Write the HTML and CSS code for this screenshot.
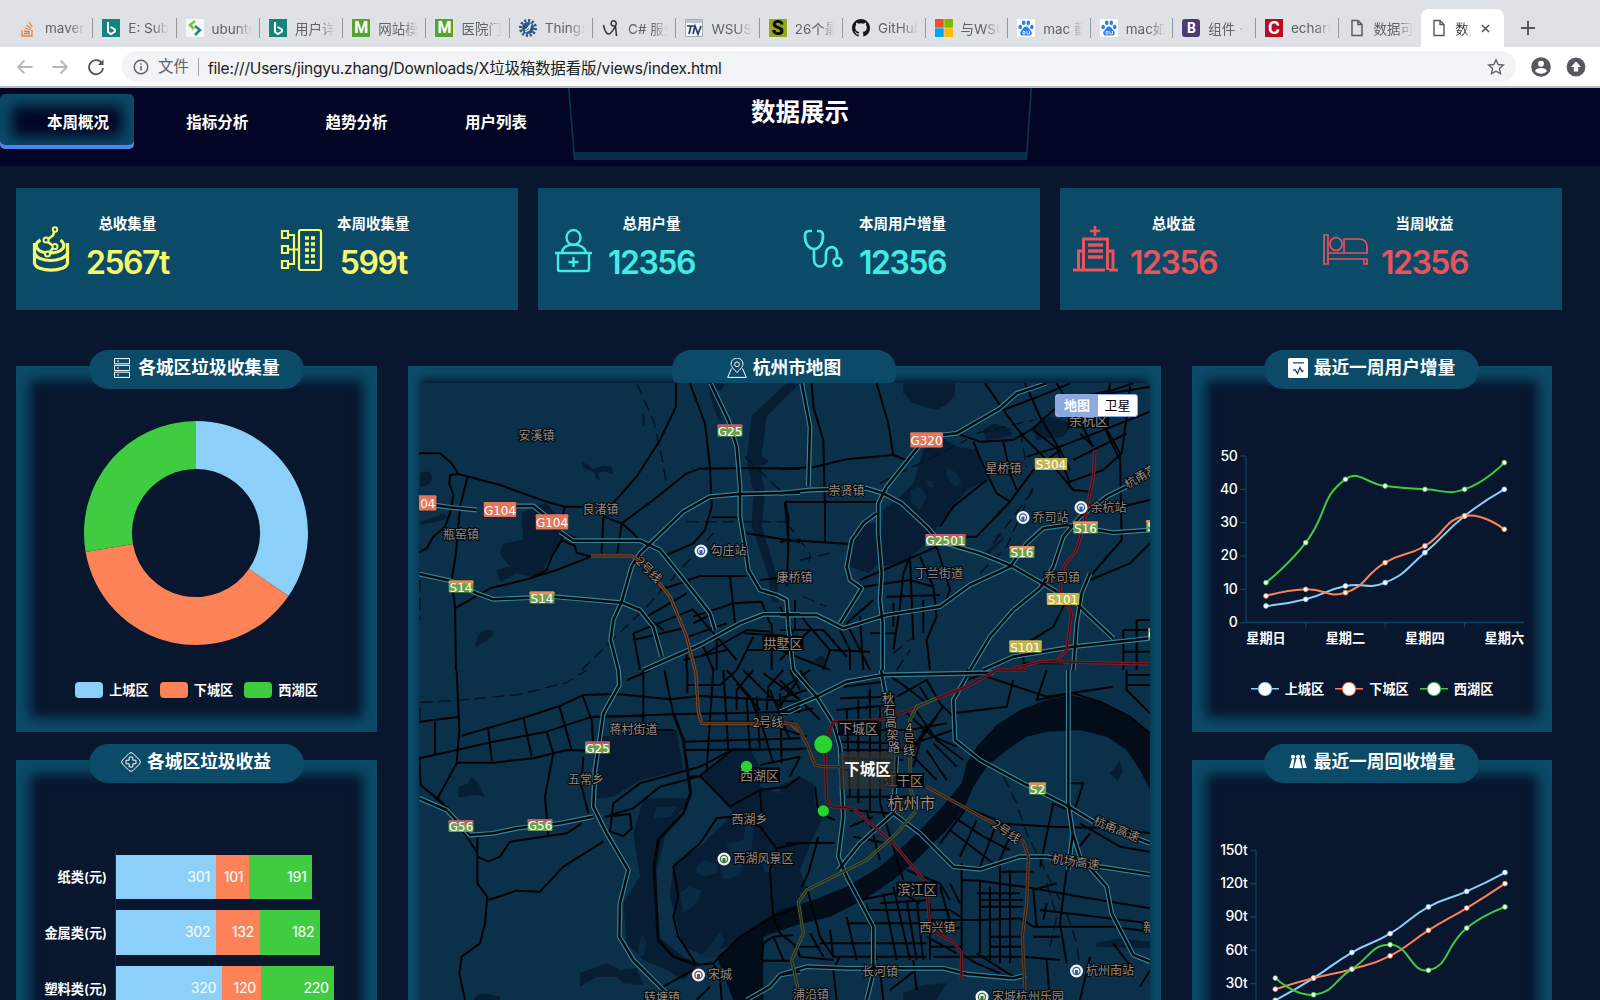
FILE: index.html
```html
<!DOCTYPE html>
<html lang="zh-CN">
<head>
<meta charset="utf-8">
<title>数据展示</title>
<link rel="stylesheet" href="styles.css">
</head>
<body>
<div class="browser">
  <div class="tabs">
    <div class="tab"><svg class="fav" viewBox="0 0 18 18"><path d="M3 11v6h10v-6M5 14.500h6M5 12l6 .8M5.800 9l5.700 2M7.500 6l4.600 3.800M10 3l3.300 5" fill="none" stroke="#e8813a" stroke-width="1.300"/></svg><span>maven</span></div>
    <div class="tab"><svg class="fav" viewBox="0 0 18 18"><path fill="#14857d" d="M0 0h18v18H0z"/><path d="M6 3v10l3 2 4-2.500v-2L8.500 8" fill="none" stroke="#fff" stroke-width="2"/></svg><span>E: Sub-process</span></div>
    <div class="tab"><svg class="fav" viewBox="0 0 18 18"><path fill="#f4f7f6" d="M0 0h18v18H0z"/><path d="M9 2L4 6l4 4" fill="none" stroke="#7ac143" stroke-width="2.500"/><path d="M9 7l5 4-5 5" fill="none" stroke="#2c7f91" stroke-width="2.500"/></svg><span>ubuntu安装</span></div>
    <div class="tab"><svg class="fav" viewBox="0 0 18 18"><path fill="#14857d" d="M0 0h18v18H0z"/><path d="M6 3v10l3 2 4-2.500v-2L8.500 8" fill="none" stroke="#fff" stroke-width="2"/></svg><span>用户详情</span></div>
    <div class="tab"><b class="fav letter green">M</b><span>网站模板</span></div>
    <div class="tab"><b class="fav letter green">M</b><span>医院门户</span></div>
    <div class="tab"><svg class="fav" viewBox="0 0 18 18"><circle cx="9" cy="9" r="7.500" fill="none" stroke="#31577f" stroke-width="3" stroke-dasharray="2.200 1.700"/><circle cx="9" cy="9" r="6" fill="#31577f"/><path d="M6 11l2-1 4-5-2 6-4 2" stroke="#dce9f5" stroke-width="1.300" fill="none"/></svg><span>ThingsBoard</span></div>
    <div class="tab"><svg class="fav" viewBox="0 0 18 18"><path d="M1.500 6c1 5 2 9 5 9s5-5 7-8c2-4-1-6-3-5s-2 5 1 5h2l1 10" fill="none" stroke="#333" stroke-width="1.500"/></svg><span>C# 服务端</span></div>
    <div class="tab"><svg class="fav" viewBox="0 0 18 18"><path d="M.5.5h17v17H.5z" fill="#f5f7f8" stroke="#a8adb2"/><path d="M1 1h16v3H1z" fill="#b8c5d4"/><path d="M2 7h7M6 7l-2 8M8 15l2-8 3 8 3-8" stroke="#203c67" stroke-width="1.700" fill="none"/></svg><span>WSUS服务</span></div>
    <div class="tab"><b class="fav letter olive">S</b><span>26个最好</span></div>
    <div class="tab"><svg class="fav" viewBox="0 0 16 16"><path fill="#16191c" d="M8 0C3.580 0 0 3.580 0 8c0 3.540 2.290 6.530 5.470 7.590.4.070.55-.17.55-.38 0-.19-.01-.82-.01-1.490-2.010.37-2.530-.49-2.690-.94-.09-.23-.48-.94-.82-1.130-.28-.15-.68-.52-.01-.53.63-.01 1.080.58 1.230.82.72 1.210 1.870.87 2.330.66.07-.52.28-.87.51-1.070-1.780-.2-3.640-.89-3.640-3.950 0-.87.31-1.590.82-2.150-.08-.2-.36-1.020.08-2.120 0 0 .67-.21 2.200.82a7.500 7.500 0 0 1 4 0c1.530-1.040 2.200-.82 2.200-.82.44 1.100.16 1.920.08 2.120.51.56.82 1.270.82 2.150 0 3.070-1.870 3.750-3.650 3.950.29.25.54.73.54 1.480 0 1.070-.01 1.930-.01 2.200 0 .21.15.46.55.38A8 8 0 0 0 16 8c0-4.420-3.580-8-8-8z"/></svg><span>GitHub</span></div>
    <div class="tab"><svg class="fav" viewBox="0 0 18 18"><path fill="#f25022" d="M0 0h8.700v8.700H0z"/><path fill="#7fba00" d="M9.300 0H18v8.700H9.300z"/><path fill="#00a4ef" d="M0 9.300h8.700V18H0z"/><path fill="#ffb900" d="M9.300 9.300H18V18H9.300z"/></svg><span>与WSUS</span></div>
    <div class="tab"><svg class="fav" viewBox="0 0 18 18"><path fill="#fff" d="M0 0h18v18H0z"/><g fill="#2f7fe6"><ellipse cx="3.200" cy="8" rx="1.800" ry="2.300"/><ellipse cx="6.700" cy="3.800" rx="1.800" ry="2.400"/><ellipse cx="11.300" cy="3.800" rx="1.800" ry="2.400"/><ellipse cx="14.800" cy="8" rx="1.800" ry="2.300"/><path d="M9 7.500c2.500 0 3 2.500 5 4.500 2 2.500 0 5-2.500 4.500H6.500C4 17 2 14.500 4 12c2-2 2.500-4.500 5-4.500z"/></g><path d="M6 12.500h2v2.500H6v-2.500M10 12v3h2.500v-3" fill="none" stroke="#fff" stroke-width=".8"/></svg><span>mac 截图</span></div>
    <div class="tab"><svg class="fav" viewBox="0 0 18 18"><path fill="#fff" d="M0 0h18v18H0z"/><g fill="#2f7fe6"><ellipse cx="3.200" cy="8" rx="1.800" ry="2.300"/><ellipse cx="6.700" cy="3.800" rx="1.800" ry="2.400"/><ellipse cx="11.300" cy="3.800" rx="1.800" ry="2.400"/><ellipse cx="14.800" cy="8" rx="1.800" ry="2.300"/><path d="M9 7.500c2.500 0 3 2.500 5 4.500 2 2.500 0 5-2.500 4.500H6.500C4 17 2 14.500 4 12c2-2 2.500-4.500 5-4.500z"/></g><path d="M6 12.500h2v2.500H6v-2.500M10 12v3h2.500v-3" fill="none" stroke="#fff" stroke-width=".8"/></svg><span>mac如何</span></div>
    <div class="tab"><b class="fav letter purple">B</b><span>组件 · Boot</span></div>
    <div class="tab"><b class="fav letter crimson">C</b><span>echarts</span></div>
    <div class="tab"><svg class="fav" viewBox="0 0 18 18"><path d="M4 1.500h6l4 4v11H4zM10 1.500v4h4" fill="none" stroke="#54585c" stroke-width="1.400"/></svg><span>数据可视化</span></div>
    <div class="tab active"><svg class="fav" viewBox="0 0 18 18"><path d="M4 1.500h6l4 4v11H4zM10 1.500v4h4" fill="none" stroke="#54585c" stroke-width="1.400"/></svg><span>数据展示</span><svg class="close" viewBox="0 0 10 10"><path d="M1 1l8 8M9 1L1 9" stroke="#45494d" stroke-width="1.500"/></svg></div>
    <svg class="plus" viewBox="0 0 14 14"><path d="M7 0v14M0 7h14" stroke="#55595e" stroke-width="2"/></svg>
  </div>
  <div class="toolbar">
    <svg class="navicon dim" viewBox="0 0 18 18"><path d="M16.500 9H2M8.500 2.500L2 9l6.500 6.500"/></svg>
    <svg class="navicon dim" viewBox="0 0 18 18"><path d="M1.500 9H16M9.500 2.500L16 9l-6.500 6.500"/></svg>
    <svg class="navicon" viewBox="0 0 18 18"><path d="M15 5.500A7 7 0 1 0 16 10"/><path d="M16.500 1.500V7H11z" fill="#505458" stroke="none"/></svg>
    <div class="omnibox">
      <svg class="info" viewBox="0 0 16 16"><circle cx="8" cy="8" r="6.800"/><path d="M8 7v4.500M8 4.200v1.600"/></svg>
      <span class="scheme">文件</span><span class="url">file:///Users/jingyu.zhang/Downloads/X垃圾箱数据看版/views/index.html</span>
      <svg class="star" viewBox="0 0 18 18"><path d="M9 1.800l2.200 4.700 5.100.6-3.800 3.500 1 5.100L9 13.200l-4.500 2.500 1-5.100L1.700 7.100l5.100-.6z"/></svg>
    </div>
    <svg class="round" viewBox="0 0 20 20"><circle cx="10" cy="10" r="9.800"/><circle cx="10" cy="6.800" r="3" fill="#fff"/><path d="M4 14c1-4 11-4 12 0-3 3.500-9 3.500-12 0z" fill="#fff"/></svg>
    <svg class="round" viewBox="0 0 20 20"><circle cx="10" cy="10" r="9.400"/><path d="M10 4.500l5 5.500h-2.800v4.500H7.800V10H5z" fill="#fff"/></svg>
  </div>
</div>

<header class="header">
  <nav class="nav">
    <a class="on">本周概况</a><a>指标分析</a><a>趋势分析</a><a>用户列表</a>
  </nav>
  <div class="title">
    <svg class="frame" viewBox="0 0 464 73"><path d="M6 64h453l-.5 8H6.500z" fill="#0a2c49"/><path d="M.7 0l6 72M463.300 0l-5 72" fill="none" stroke="#0c3552" stroke-width="1.600"/></svg>
    <h1>数据展示</h1>
  </div>
</header>

<main class="page">
  <section class="stats">
    <div class="card yellow">
      <div class="stat"><svg viewBox="0 0 46 48"><path d="M11.500 14c-9 5-3 13 9 13s19-7 11-13M5.500 17v20c1 9.500 32 9.500 33 0V17M5.500 27c3 10 29 10 33 0" stroke-width="3.200"/><path d="M26 3.500l-2 6-7 5 8 6-6 8" stroke-width="2.600"/><g stroke-width="2" fill="#0b4b68"><circle cx="26" cy="3.500" r="2.200"/><circle cx="17" cy="14" r="2.500"/><circle cx="26" cy="20.500" r="2.500"/><circle cx="18.500" cy="28" r="2.500"/></g></svg><p><span>总收集量</span><b>2567t</b></p></div>
      <div class="stat"><svg viewBox="0 0 46 48"><path d="M21 4h18q2 0 2 2v36q0 2-2 2H21q-2 0-2-2V6q0-2 2-2zM2 5h6v7H2zM2 20h6v7H2zM2 35h6v7H2zM8 9h6v29H8M8 23.500h11"/><path d="M25 12h10M25 18h10M25 24h10M25 30h10M25 36h10" stroke-width="3.600" stroke-dasharray="4 2"/></svg><p><span>本周收集量</span><b>599t</b></p></div>
    </div>
    <div class="card cyan">
      <div class="stat"><svg viewBox="0 0 46 48"><g stroke-width="2.400"><ellipse cx="22.500" cy="11.500" rx="7" ry="7.500"/><path d="M11 26c2-10 21-10 24 0M4 27h37M7 27v16q0 2 2 2h27q2 0 2-2V27M17.500 36h10M22.500 31v10"/></g></svg><p><span>总用户量</span><b>12356</b></p></div>
      <div class="stat"><svg viewBox="0 0 46 48"><g stroke-width="2.700"><path d="M10 5H7q-4 0-4 5c0 8 4 13 9 13s9-5 9-13q0-5-4-5h-2M12 23v10c0 10 12 10 12 0v-5c0-9 11-9 11-1v4"/><circle cx="35.500" cy="36" r="4"/></g></svg><p><span>本周用户增量</span><b>12356</b></p></div>
    </div>
    <div class="card coral">
      <div class="stat"><svg viewBox="0 0 46 48"><path d="M22 0v10M17 5h10" stroke-width="2.600"/><path d="M0 44h32M36 44h9M5.500 44V25h5M10.500 44V13h24v31M35 25h5v19" stroke-width="3"/><path d="M15 19h15M15 25h15M15 31h15" stroke-width="3.500"/></svg><p><span>总收益</span><b>12356</b></p></div>
      <div class="stat"><svg viewBox="0 0 46 48"><g stroke-width="1.700"><path d="M0 9h4v24h39v5h-3v-5H4v5H0zM4 27h39V21q0-8-8-8H20v14"/><ellipse cx="12" cy="18" rx="6" ry="6.500"/></g></svg><p><span>当周收益</span><b>12356</b></p></div>
    </div>
  </section>

  <section class="board">
    <div class="col">
      <article class="panel">
        <h2><svg viewBox="0 0 20 20"><path d="M2.500.6h15v5.200h-15zM2.500 7.400h15v5.200h-15zM2.500 14.200h15v5.200h-15zM5 3.200h2M5 10h2M5 16.800h2"/></svg><span>各城区垃圾收集量</span></h2>
        <svg class="donut" viewBox="-113 -113 226 226">
          <path fill="#8ccff9" d="M0-112A112 112 0 0 1 92.500 63.100L52.900 36.100A64 64 0 0 0 0-64z"/>
          <path fill="#fd8258" d="M92.500 63.100A112 112 0 0 1-110.400 19L-63.100 10.900A64 64 0 0 0 52.900 36.100z"/>
          <path fill="#40cc40" d="M-110.400 19A112 112 0 0 1 0-112V-64A64 64 0 0 0-63.100 10.900z"/>
        </svg>
        <div class="legend blocks"><span class="s1">上城区</span><span class="s2">下城区</span><span class="s3">西湖区</span></div>
      </article>
      <article class="panel">
        <h2><svg viewBox="0 0 20 20"><path d="M8 1.500q2-1.800 4 0l6.500 6.500q1.800 2 0 4L12 18.500q-2 1.800-4 0L1.500 12q-1.800-2 0-4z"/><path d="M8.200 5h3.600v3.200H15v3.600h-3.200V15H8.200v-3.200H5V8.200h3.200z"/></svg><span>各城区垃圾收益</span></h2>
        <div class="bars">
          <div class="row"><label>纸类(元)</label><div class="track"><i class="b1" style="width:99.5px">301</i><i class="b2" style="width:33.4px">101</i><i class="b3" style="width:63.2px">191</i></div></div>
          <div class="row"><label>金属类(元)</label><div class="track"><i class="b1" style="width:99.9px">302</i><i class="b2" style="width:43.7px">132</i><i class="b3" style="width:60.2px">182</i></div></div>
          <div class="row"><label>塑料类(元)</label><div class="track"><i class="b1" style="width:105.8px">320</i><i class="b2" style="width:39.7px">120</i><i class="b3" style="width:72.8px">220</i></div></div>
        </div>
      </article>
    </div>

    <article class="panel wide">
      <h2><svg viewBox="0 0 20 20"><path d="M10 14.500C4 9 4 6.500 4 6a6 6 0 0 1 12 0c0 .5 0 3-6 8.500z"/><circle cx="10" cy="6.300" r="2.400"/><path d="M4.500 10.500L.7 19.400h18.600l-3.800-8.900"/></svg><span>杭州市地图</span></h2>
      <div class="mapbox">
        <svg class="map" id="map" viewBox="419 383 731 617"></svg>
        <div class="maptype"><b>地图</b><span>卫星</span></div>
        <div class="tip">下城区</div>
      </div>
    </article>

    <div class="col">
      <article class="panel">
        <h2><svg viewBox="0 0 20 20"><rect width="20" height="20" rx="1.500" fill="#fff" stroke="none"/><path d="M5 4.800h11M5 12.500l2-1 2.500 4 2.500-6 2 4 1.500-1" stroke="#0b4b68" stroke-width="1.300"/></svg><span>最近一周用户增量</span></h2>
        <svg class="chart" id="users" viewBox="1192 389 360 260"></svg>
        <div class="legend lines"><span class="s1">上城区</span><span class="s2">下城区</span><span class="s3">西湖区</span></div>
      </article>
      <article class="panel">
        <h2><svg viewBox="0 0 20 20"><g fill="#fff" stroke="none"><circle cx="5" cy="4.800" r="2.100"/><circle cx="10" cy="4.800" r="2.100"/><circle cx="15" cy="4.800" r="2.100"/><path d="M4 7h2.400L5 16H1.200zM8.300 7h3.400l2.500 9.300H5.800zM13.600 7H16l2.800 9H15z"/></g></svg><span>最近一周回收增量</span></h2>
        <svg class="chart" id="recycle" viewBox="1192 783 360 260"></svg>
      </article>
    </div>
  </section>
</main>
<script src="charts.js"></script>
</body>
</html>
```
FILE: styles.css
```css
* { box-sizing: border-box; }
body { margin: 0; width: 1600px; height: 1000px; overflow: hidden; background: #08162e; color: #fff; font-family: Inter, "Noto Sans CJK SC", sans-serif; }
svg { display: block; flex: none; }

.browser { height: 88px; background: #fff; border-bottom: 2px solid #b9bbc2; }
.tabs { height: 47px; background: #dee1e6; display: flex; align-items: flex-end; padding-left: 10px; }
.tab { width: 83.3px; height: 38px; padding: 0 8px 0 9px; display: flex; align-items: center; gap: 8px; position: relative; color: #5f6368; font-size: 13.5px; }
.tab:nth-child(n+11) { width: 82.6px; }
.tab::after { content: ""; position: absolute; right: 0; top: 9px; height: 20px; width: 1px; background: #94989d; }
.tab:nth-child(17)::after, .tab.active::after { display: none; }
.tab span { flex: 1; overflow: hidden; white-space: nowrap; -webkit-mask-image: linear-gradient(90deg, #000 60%, transparent); mask-image: linear-gradient(90deg, #000 60%, transparent); }
.tab.active { width: 83px; background: #fff; color: #3c4043; border-radius: 8px 8px 0 0; gap: 7px; }
.tab.active span { flex: none; width: 16px; }
.fav { width: 18px; height: 18px; flex: none; }
.close { width: 9px; height: 9px; margin-left: 3px; }
.plus { width: 14px; height: 14px; margin: 0 0 12px 17px; }
.letter { font: bold 16px/18px Roboto, sans-serif; color: #fff; text-align: center; }
.green { background: #58a32b; }
.olive { background: #94a81c; color: #0c0e05; font: 900 20px/18px Roboto, sans-serif; }
.purple { background: #4d3a70; border-radius: 3px; font-size: 14px; }
.crimson { background: #b80e21; font-size: 18px; }

.toolbar { height: 39px; display: flex; align-items: center; padding: 0 15px 0 16px; }
.navicon { width: 18px; height: 18px; margin-right: 17.300px; fill: none; stroke: #505458; stroke-width: 1.8; }
.navicon.dim { stroke: #b6b9bc; }
.omnibox { width: 1394px; height: 31px; margin-right: 15px; flex: none; border-radius: 16px; background: #f1f3f4; display: flex; align-items: center; padding: 0 11px 0 11px; }
.info { width: 16px; height: 16px; fill: none; stroke: #5f6368; stroke-width: 1.5; }
.scheme { margin-left: 9px; padding-right: 9px; border-right: 1px solid #a2a5a8; color: #5f6368; font-size: 15.500px; line-height: 18px; }
.url { margin-left: 9px; color: #202124; font-size: 15.500px; letter-spacing: -.2px; }
.star { width: 18px; height: 18px; margin-left: auto; fill: none; stroke: #5f6368; stroke-width: 1.4; }
.round { width: 20px; height: 20px; margin-right: 15px; fill: #55595e; }

.header { height: 78px; background: #020624; display: grid; grid-template-columns: 568px 464px 1fr; }
.nav { display: flex; gap: 5.3px; padding-top: 6px; }
.nav a { width: 134px; height: 55px; padding-left: 47px; font-size: 15.500px; font-weight: 700; line-height: 57px; white-space: nowrap; }
.nav .on { border-radius: 5px; box-shadow: inset 0 -4px #4d85ee, inset 0 0 14px 12px #0b4b68; }
.title { position: relative; }
.frame { position: absolute; left: 0; top: 0; width: 464px; height: 73px; }
h1 { margin: 0; font-size: 24.500px; line-height: 48px; font-weight: 700; text-align: center; position: relative; }

.page { padding: 22px 38px 0 16px; }
.stats { display: grid; grid-template-columns: repeat(3, 502px); gap: 20px; }
.card { height: 122px; background: #0b4b68; display: flex; }
.stat { width: 251px; padding: 25px 0 0 13px; display: flex; gap: 11px; }
.stat svg { width: 46px; height: 48px; margin-top: 13px; fill: none; stroke: currentColor; stroke-width: 2.200; overflow: visible; }
.stat p { margin: 0; text-align: center; }
.stat span { display: block; color: #fff; font-size: 14.500px; font-weight: 700; line-height: 22px; }
.stat b { display: block; font-size: 32px; font-weight: 600; line-height: 40px; margin-top: 8px; letter-spacing: -1.5px; }
.yellow { color: #f5fa6c; }
.cyan { color: #43ebe3; }
.coral { color: #e8535c; }

.board { display: grid; grid-template-columns: 361px 753px 360px; gap: 31px; margin-top: 56px; }
.col { display: flex; flex-direction: column; gap: 28px; }
.panel { height: 366px; box-shadow: inset 0 0 12px 14px #0b4b68; display: flex; flex-direction: column; align-items: center; }
h2 { width: 215px; height: 39px; margin: -16px 1px 0 0; flex: none; border-radius: 20px; background: #0b4b68; display: flex; justify-content: center; align-items: center; gap: 6px; font-size: 17.700px; font-weight: 700; line-height: 24px; white-space: nowrap; }
h2 span { margin-top: -3px; }
h2 svg { width: 20px; height: 20px; margin-top: -4px; fill: none; stroke: #fff; stroke-width: 1; }
.wide { height: 760px; box-shadow: inset 0 0 10px 13px #0b4b68; }
.wide h2 { width: 224px; height: 33px; border-radius: 19px 19px 6px 6px; padding-top: 6px; }
.donut { width: 226px; height: 226px; margin: 31px 1px 0 0; }
.legend { display: flex; gap: 11px; font-size: 13.200px; font-weight: 600; line-height: 20px; }
.legend span { display: flex; align-items: center; gap: 6px; }
.legend span::before { content: ""; width: 28px; height: 16px; border-radius: 4px; background: var(--c); }
.s1 { --c: #8ccff9; } .s2 { --c: #fd8258; } .s3 { --c: #40cc40; }
.blocks { margin-top: 34px; }
.lines { margin-top: 30px; }
.lines span::before { border-radius: 0; background: radial-gradient(circle, #fff 5.500px, var(--c) 6.500px, transparent 7.500px), linear-gradient(var(--c), var(--c)) 0 7px / 28px 1.500px no-repeat; }
.chart { width: 360px; height: 260px; }
.chart text { fill: #fff; font-size: 14px; font-weight: 500; letter-spacing: -.3px; }
.chart text.cat { font-size: 13.200px; font-weight: 600; letter-spacing: 0; }
.axis { fill: none; stroke: #12405f; stroke-width: 1.3; }
.series { fill: none; stroke-width: 2; }

.bars { align-self: stretch; margin: 66px 0 0 15px; display: flex; flex-direction: column; }
.row { height: 55.8px; display: flex; align-items: center; }
.row label { width: 76px; text-align: right; font-size: 13.200px; font-weight: 600; white-space: nowrap; }
.track { margin-left: 8px; height: 100%; display: flex; align-items: center; border-left: 1px solid #232c3c; }
.track i { height: 44.600px; padding-right: 5.500px; text-align: right; font: 500 14px/44.600px Inter, sans-serif; letter-spacing: -.3px; color: #ecf8f4; }
.b1 { background: #8ccff9; } .b2 { background: #fd8258; } .b3 { background: #40cc40; }

.mapbox { position: relative; width: 731px; height: 617px; overflow: hidden; }
.map { width: 731px; height: 617px; background: #0b3049; }
.map path { fill: none; vector-effect: non-scaling-stroke; stroke-linejoin: round; }
.map .wood { fill: #071d33; }
.map .clearing { fill: #0a2a43; }
.map .river { fill: #020d19; }
.map .road { stroke: #010306; stroke-width: 2; }
.map .rail { stroke: #051320; stroke-width: 1.5; stroke-dasharray: 12 6; }
.map .edge { stroke: #36859a; stroke-width: 4.8; }
.map .core { stroke: #03090f; stroke-width: 2.5; }
.map .metro { stroke-width: 3.400; }
.map text { font: 12px "Noto Sans CJK SC", sans-serif; text-anchor: middle; fill: #958a86; stroke: #080808; stroke-width: 2px; paint-order: stroke; }
.map text.city { font-size: 16px; }
.map text.district { font-size: 13px; }
.map text.sign { font: 12px "DejaVu Sans", sans-serif; fill: #fff; stroke: none; }
.maptype { position: absolute; left: 636px; top: 11px; width: 83px; height: 23px; display: flex; border-radius: 3px; overflow: hidden; background: #fff; font-size: 13px; line-height: 21px; text-align: center; border: 1px solid #8ea8e0; }
.maptype b { width: 42px; background: #8ea8e0; font-weight: 700; }
.maptype span { flex: 1; color: #000; }
.tip { position: absolute; left: 420px; top: 369px; width: 57px; height: 37px; background: rgba(50, 50, 50, .7); border-radius: 4px; font-size: 15.500px; font-weight: 600; line-height: 35px; text-align: center; }
```
FILE: charts.js
```js
const COLORS = ['#8ccff9', '#fd8258', '#40cc40'];

// Cubic smoothing with control points proportional to the neighbouring segments.
function smooth(pts, k = 0.5) {
  const n = pts.length;
  const cps = pts.map((p, i) => {
    if (i === 0 || i === n - 1) return [p, p];
    const a = pts[i - 1], b = pts[i + 1];
    const v = [(b[0] - a[0]) * k, (b[1] - a[1]) * k];
    const lp = Math.hypot(p[0] - a[0], p[1] - a[1]);
    const ln = Math.hypot(b[0] - p[0], b[1] - p[1]);
    const r = ln / (lp + ln);
    return [[p[0] - v[0] * (1 - r), p[1] - v[1] * (1 - r)], [p[0] + v[0] * r, p[1] + v[1] * r]];
  });
  return 'M' + pts[0] + pts.slice(1).map((p, i) => `C${cps[i][1]} ${cps[i + 1][0]} ${p}`).join('');
}

function lineChart(id, o) {
  let out = `<path class="axis" d="M${o.left} ${o.top}V${o.bottom}H${o.right}"/>`;
  o.labels.forEach((t, i) => {
    const y = o.top + i * 33.33;
    out += `<path class="axis" d="M${o.left} ${y}h-6"/><text x="${o.left - 8.5}" y="${y + 4.5}" text-anchor="end">${t}</text>`;
  });
  (o.cats || []).forEach((t, i) => {
    out += `<text class="cat" x="${o.x0 + i * 2 * o.step}" y="643" text-anchor="middle">${t}</text>`;
    if (i) out += `<path class="axis" d="M${o.x0 + (i * 2 - 1) * o.step} ${o.bottom}v5"/>`;
  });
  o.data.forEach((s, k) => {
    const pts = s.map((v, i) => [o.x0 + i * o.step, o.top + (o.max - v) * 166.65 / o.max]);
    out += `<path class="series" stroke="${COLORS[k]}" d="${smooth(pts)}"/>`;
    out += pts.map(p => `<circle cx="${p[0]}" cy="${p[1]}" r="2.4" fill="#fff" stroke="${COLORS[k]}" stroke-width=".8"/>`).join('');
  });
  document.getElementById(id).innerHTML = out;
}

lineChart('users', {
  left: 1246, right: 1524, top: 456, bottom: 622.5, x0: 1266, step: 39.72, max: 50,
  labels: ['50', '40', '30', '20', '10', '0'], cats: ['星期日', '星期二', '星期四', '星期六'],
  data: [[5, 7, 11, 12, 21, 32, 40], [8, 10, 9, 18, 23, 32, 28], [12, 24, 43, 41, 40, 40, 48]]
});
lineChart('recycle', {
  left: 1256, right: 1524, top: 850.3, bottom: 1017, x0: 1275.3, step: 38.28, max: 150,
  labels: ['150t', '120t', '90t', '60t', '30t', '0t'],
  data: [[15, 35, 58, 75, 99, 113, 130], [25, 35, 43, 55, 78, 98, 120], [35, 20, 43, 65, 42, 80, 99]]
});

// Map sheets: each has its own origin and three units per pixel.
const SHEETS = {
  nw: { at: [400, 340],
    wood: [
      'M365 520L400 500 440 490 480 540 490 600 450 650 430 690 400 712 350 700 300 725 290 690 330 680 300 640 310 610 370 600z',
      'M545 365l20 10 15 12 30-10 25 5 5 20-30-8-15 5 5 22-12-5-5-20-30-10z',
      'M60 400q30-15 35 10t-35 30zM225 920q10-60 50-50 20 20-50 50zM60 545q40-10 70-25l15 12q-40 20-85 20z',
      'M925 130h50l-10 20-15 0 15 90-10 0-25-70zM1160 130h40l-100 100-15 120 20 10-5 12-20 5 15 80-10 100 45 150 5 80-20 0-10-80-50-150 5-100-15-70-5-30 15-130zM725 222l8 0 2 40-8-2z'
    ],
    rail: ['M710 130L760 240 785 350 800 435', 'M1035 350L1160 470', 'M860 545H1170M545 990L750 790 940 580', 'M60 720V840'],
    road: [
      'M58 340H120L155 370 175 402 300 435 430 482 495 500H550M495 500L480 555',
      'M175 402L150 405 148 430 160 465 150 520 135 560 100 590 80 625 58 637',
      'M203 410L180 500 168 640 155 720 165 800 168 990',
      'M485 575L545 604M485 600L525 618 530 638 573 650M485 575V600L455 650 440 690 395 715',
      'M573 650L470 690 380 718 270 745 165 805',
      'M828 130V200L780 300 710 410 630 500',
      'M870 130L915 250 930 380 935 500 915 570 880 610 800 645',
      'M1200 386L1050 384 900 386 860 400 760 480 665 550 652 640M610 530L605 640M610 530L665 550 700 580 720 605',
      'M865 720L900 708H1040M990 708L1005 850M870 745L865 715M880 830L1000 790 1085 785M880 810L950 890 1010 960M1085 785L1110 850',
      'M780 750L870 720M740 830L860 760M700 880L880 808 M700 880L720 990M700 900L850 865M865 890L980 850M900 950L1040 870 1110 875M740 830L790 870M880 850L940 820M850 960L980 930M860 940V990M910 920L940 990M950 890V990',
      'M1040 580L1100 590 1200 606M935 532H1010M1155 486H1200M1155 486L1165 530V620 L1160 740M1080 720L1130 715M1030 880L1200 890M1040 930H1200M1060 890L1010 990M1115 850V990'
    ],
    high: [
      'M932 130L985 240 1010 320 1020 440V530L1035 620 1045 690 1080 750 1130 765 1160 780 1165 860 1180 990',
      'M1200 458L1020 462 930 470 850 515 720 640 695 680 665 785 640 840 632 900 655 990',
      'M100 495L150 502 230 510M350 498H400L440 530M480 575L520 602H720L780 630 860 730 930 820 945 870',
      'M58 702L150 722 230 760 280 778 460 770 665 788 720 810 760 860 785 950',
      'M730 990L900 915 1020 850 1090 823H1200'
    ],
    metro: [['#77472a', 'M573 648H695L730 670 810 770 860 890 885 990']] },
  ne: { at: [780, 340],
    wood: [
      'M370 130H525V165L500 195 465 210 400 190 370 160z',
      'M610 270l30-20 50 15 8 20-40 10-40 5zM760 260l50-30 70 20-30 40-80 10z',
      'M430 330L480 290 530 320 590 330 610 390 620 420 560 450 520 500 480 550 440 610 380 660 310 680 300 600 310 510 350 480 400 430z',
      'M215 580l50-30 30 0 10 110-40 40-55-20z',
      'M610 640l60-50 0 10-50 50zM640 590l25-15 0 15zM100 960l25-15 12 15-10 20z'
    ],
    clearing: ['M500 380l30 20 15 30-20 10-25-30zM390 450l30-10 20 30-20 40-25-20zM440 420l20 5 0 20-15-5z'],
    rail: ['M300 430L560 300M590 280L760 240M600 700L680 620 760 440', 'M640 610L760 450', 'M20 550L90 640 80 740', 'M720 270L740 380', 'M60 660L150 640M70 770L140 800M340 940L400 890M350 990L390 930'],
    road: [
      'M0 40V0M95 130L100 200 130 300 135 500V610',
      'M290 130L325 250 340 345 390 365M340 345L200 358 100 382 0 386',
      'M15 486H290M15 486L25 600 0 606M25 600L210 612M530 280L600 305 700 300 760 265 820 210 880 175 1000 150 1060 130',
      'M615 130L670 210 730 290 830 390 880 450 935 455M735 130L780 230 840 330 870 390M830 130L880 210 940 320M670 210L800 160 870 130M990 130L970 250 1020 340 1025 600 930 710M1050 140L1040 230 1025 340 970 390 870 425',
      'M740 350L840 320 970 270 1110 215M880 360L1040 280M1110 480L940 520M860 200L930 170 1110 140M940 170L990 300 1020 360M760 270L830 325 870 430M900 280L940 320',
      'M580 305L620 400 650 460 690 485 590 590H560M670 305L690 400 710 450M690 485L760 390 840 330M620 420L520 500 480 560',
      'M390 650L370 700 360 800 340 930M420 650L460 740 470 830 440 900 450 990M250 740L390 720 460 740M240 720L380 660 470 620M320 770L480 765M280 780L200 850M470 620L510 750 490 800M340 790V860M390 650L400 900M430 780V880',
      'M1110 610L1050 670 930 720M870 760L820 860 740 910M1030 870H1110M1030 870V990M1070 840V990M1070 840H1110M1030 900H1110M1030 935H1110M730 950V990M730 970H850',
      'M60 820L80 850 150 930 130 990M0 870L130 870 200 950M150 930L270 935M200 850L270 990M240 830L250 990M270 880H350M0 930L150 990M90 870L0 960M180 870L210 930V990M45 780V870M0 800L40 880'
    ],
    high: [
      'M65 130L90 260 85 440M0 460L90 450 260 445 310 460 365 490 440 560 480 605 600 640 700 680 830 755',
      'M800 130L710 160 660 205 530 280 440 290 400 340 320 440 295 490V580L305 700 300 780 308 850V990',
      'M290 520L250 550 215 600 200 680 210 720 245 745 180 850',
      'M0 825H110L190 865 320 825 480 800 570 735 690 680 740 610 790 565 860 555 1000 578 1110 570',
      'M1040 440L980 470 900 530 850 590 820 680 780 745 700 810 630 890 570 990',
      'M610 990L700 950 880 920 1110 895M930 700L905 760 890 850 880 990M870 770L920 820 1000 895'
    ],
    metro: [['#7a1d2c', 'M945 330L940 410 905 580 890 630 850 680 840 750 875 820 860 930 830 962 780 965 700 985M800 965L1110 972']] },
  sw: { at: [400, 670],
    wood: [
      'M600 200L830 180 850 300 720 330 640 380 590 385z',
      'M730 385H870L800 480 770 600 775 800 850 860 900 880 850 930 800 900 730 870 680 820 670 700 720 620 700 490z',
      'M900 310L1000 240 1050 240 1080 290 1080 350 1200 390V700L1110 740 1000 820 920 860 850 830 810 680 820 580 900 530 1000 430z',
      'M175 350l30-10 10-20 20 20 20 40-30-5-50 8zM220 990q10-30 80-10v10zM540 910l80-30 40 20 50-5 20 50-60-5-20-20-60 0-50 30z'
    ],
    clearing: ['M890 590l20-20 40 10 5 25-40 15-25-10zM960 590l40-15 30 10-10 30-50 15zM980 520l50-10 10-60 20 30-5 60-60 20zM840 670l25-20 40 10-15 40-40 30zM1080 560l30 0 10 40-25 10zM710 860l15-70 15 30-10 40zM900 860l60-70 15 20-30 50zM770 410h60l-20 30-50 5z'],
    rail: ['M60 150V98L180 90 350 75 500 38 560 0'],
    road: [
      'M170 0L178 180 170 280 110 390M58 155L180 140M105 155V258M185 197L365 145 480 108 550 75 650 72 810 88 900 78 1200 95',
      'M58 265L170 240 280 215 440 185 570 142 820 133 1200 125M170 278H280L400 265 500 240 580 242M265 178L275 272M370 145L395 258M440 185L460 250 435 380 445 500M478 108L515 240M548 78L575 150 580 240',
      'M58 265L62 345 130 400M62 345L150 420 232 550V640L262 680 255 760 240 820 185 860 178 910 195 990M232 500V560L265 575 300 560 330 515 500 490 545 460',
      'M265 690L350 662 420 665 490 590 610 515M615 440L690 432 695 475 670 498 630 485 640 400 720 340 900 290 1000 238 1080 240',
      'M550 260L545 350 565 430M615 440L700 415 780 350 900 318 1000 238',
      'M682 30L750 0M730 0V180M580 140L730 138M793 0L820 133 850 210M730 180H820M850 215L1200 205M855 240L1200 238',
      'M862 0V70M862 45H960L1010 0M940 0L920 300M870 320L900 318 990 410 1080 360 1160 350 1200 320M1080 360L1085 430',
      'M990 440L950 445 900 520 820 590 835 680 820 740 835 800 890 885M985 440L1080 470 1130 535 1200 520M1130 535L1110 600 1115 680 1120 740 1140 790',
      'M890 885L940 880 1020 800 1120 740 1200 710M790 950L880 900M890 990L930 950M940 880L960 920 965 990M1085 872H1180M1085 872L1090 820 1120 800 1180 795M1120 800L1150 870',
      'M980 0L1050 80 1090 180 1120 280M1070 80L1080 240M1010 120V60L1060 0M1110 60L1170 210M1030 0L1150 120M1090 10L1200 90M1100 120L1105 50 1150 0M1010 40L1080 120M970 0L985 240M1040 90L1050 240M1140 70L1145 280M900 155H1180M1080 285L1200 260'
    ],
    wide: ['M820 130L850 210 872 370 850 430 775 510 762 590 775 810 820 860 890 885'],
    high: [
      'M655 0L658 45 610 130 600 200 585 300 580 410 620 490 685 600 660 700 658 800 700 870 800 970',
      'M58 385L140 420 210 495 280 490 350 475 480 460 580 440', 'M1140 125H1170L1200 110M1040 990L1110 950 1140 915 1200 905'
    ],
    metro: [['#77472a', 'M887 0L895 125 905 160H1170L1200 185']] },
  se: { at: [780, 670],
    wood: ['M0 345L60 320 100 340 105 400 130 440 100 500 60 600 80 660 0 700z', 'M990 310l20-25 8-15 10 35-15 28zM945 820l80-15 85 10v20l-160-5zM370 970l60-25 70-5-30 50h-100z'],
    rail: ['M670 320L710 400 740 490 840 690', 'M860 730L890 820 900 900', 'M270 50L260 120', 'M800 640L830 740 810 830'],
    road: [
      'M560 0L800 80 1000 50M800 0L770 90 880 70 960 95 1050 140 1110 190M700 30L680 110 520 130M1040 0V60L1110 130M1040 15H1110M1040 45H1110',
      'M0 85L80 60 M0 135L100 115 M0 30L120 150M60 0L110 80 M90 0L0 60M0 175L80 200M0 240L90 235M60 260L30 320',
      'M190 50L310 35M180 85L320 80M170 120L330 105M190 180H400M180 215L360 220M190 240H400M190 265L370 270M190 300H350M200 120L210 380M235 90V400M270 60V420M300 110V400M340 70L345 200',
      'M320 10L390 60 440 100 M350 80L440 30 480 100 530 150M380 130L460 200 530 230M400 110L470 210 550 270M390 180L500 160M400 220L520 180M400 260L470 330M430 180L400 290M470 140L400 240M490 110L400 230M420 50L450 100M440 240L500 330M460 220L530 290',
      'M200 380H400M210 420L330 430M210 470L280 440M220 500L320 520M260 420L300 570M300 400L340 530M340 530L370 630M15 520L165 518M115 500L85 610 65 650M80 650L120 800 160 860M105 350L115 430 165 450',
      'M640 460L820 470 1000 475 1110 490M520 440L610 500 690 540M550 410L650 450M480 520L540 440M540 560L590 450M600 590L650 460M650 590L690 500M510 480L640 580M820 400L780 590M815 400L870 420M870 340H910L880 430M930 490L890 540M900 460L1020 530 1110 545M860 600L840 760 860 880',
      'M545 630L600 632 760 655 900 680 1110 715M545 580V850M600 630V850M630 650V770M660 580V880M690 600V880M600 690H730M600 710H730M440 750H600L720 745 760 770H1000L1110 785M590 670H720M630 800H730M630 830H730M630 770V870M600 790V750',
      'M380 600L480 640 510 690M510 640L540 700M350 660L420 700M240 690L440 650M300 700L450 690M250 720L510 720M200 760H440M150 780L160 860H440M120 820H440M200 740L230 870M260 700L290 870M310 670L350 870M340 650L390 870M380 690L410 870M410 690L430 870M450 700V870M480 650L520 790M90 790L130 860',
      'M0 790L50 830 60 860 160 870M40 830H120M180 860L160 900 170 990M400 870L410 960M540 850L590 880 660 910M590 850L700 920M800 700L790 750M830 640L760 660 770 770M760 800H840M730 860L840 870M800 870L810 990M1000 820L1060 900M1110 900L1080 950M930 860L900 990M460 860H730M510 720L540 740M780 720L1110 760M440 800L530 850M300 900L310 990M420 890L330 960M30 0L60 60M0 110L60 20M560 30L640 0M560 410L540 440M660 605H760M440 770L550 775M450 830H545'
    ],
    high: [
      'M40 0L110 80 160 160 180 230 190 440 175 560 200 620 280 770V910L260 990M0 125L110 80 200 35 310 15 640 8M303 0L320 90M560 20L520 90 525 210 600 270 720 335 850 400 940 455 1110 520',
      'M865 0V400L878 490 865 600M875 480L900 560 980 650 995 730 1060 855 1110 875M175 600L240 520 340 430 350 260M340 430L420 490 520 590 600 598 720 560 800 560 960 590 1110 613',
      'M0 915L80 890 200 895 490 895 560 912 700 925 740 915'
    ],
    metro: [
      ['#6d1d29', 'M740 0H650L560 50 470 85 390 120 300 150 160 155 145 190 135 240 140 390 155 410 220 415 260 450 340 520 440 640 450 780 520 815 545 850 543 930'],
      ['#5f3e26', 'M0 155L50 165 80 220 105 285 130 290H300M440 350L640 460 730 515 745 560 740 700 727 800 735 960'],
      ['#435631', 'M470 85L410 110 390 150V350L410 420 350 490 260 570 80 660 55 695 70 790 35 870 55 960']
    ] }
};

const LABELS = [
  ['安溪镇', 536.5, 440], ['瓶窑镇', 461, 539], ['良渚镇', 600.5, 514], ['勾庄站', 728.5, 555], ['康桥镇', 794.5, 582],
  ['崇贤镇', 846.5, 495], ['星桥镇', 1003.5, 473], ['乔司站', 1050.5, 521.5], ['余杭站', 1108.5, 511.5], ['丁兰街道', 939, 578],
  ['乔司镇', 1062, 581.5], ['蒋村街道', 633.5, 733.5], ['五常乡', 586, 784], ['西湖乡', 749.5, 823.5], ['西湖风景区', 763.5, 863],
  ['2号线', 768, 727], ['宋城', 720, 979], ['转塘镇', 662, 1002], ['西兴镇', 937.5, 931.5], ['长河镇', 880, 976],
  ['浦沿镇', 811, 999], ['杭州南站', 1110, 975], ['宋城杭州乐园', 1028, 1001], ['新', 1149, 931.5]
];
const DISTRICTS = [['余杭区', 1088.5, 425], ['拱墅区', 783, 648], ['下城区', 858.5, 732.5], ['西湖区', 759.500, 779.5], ['江干区', 903.5, 785], ['滨江区', 917, 893.5]];
const TILTED = [
  ['2号线', 646, 573, 45], ['2号线', 1004, 835, 35], ['杭甬高速', 1115, 833, 22], ['机场高速', 1075, 866, 8], ['杭甬高', 1143, 480, -30]
];
const SIGNS = [
  ['G25', 730, 430.5, 'g'], ['104', 424, 503, 'o'], ['G104', 500, 509.5, 'o'], ['G104', 552, 522, 'o'], ['G320', 926.5, 440, 'o'],
  ['S304', 1051, 464, 'y'], ['G2501', 945.5, 540, 'g'], ['S16', 1022, 552, 's'], ['S16', 1085.5, 527.5, 's'], ['S14', 461, 586.5, 's'],
  ['S14', 542, 597.5, 's'], ['S101', 1063, 599, 'y'], ['S101', 1025.5, 646.5, 'y'], ['G25', 597.5, 747.5, 'g'], ['G56', 461, 826, 'g'],
  ['G56', 540, 825, 'g'], ['S2', 1037.5, 788.5, 's'], ['S', 1151, 526, 's'], ['G', 1153, 634, 's']
];
const PLACES = [[701, 551, '#3a5f9c'], [1023, 517.5, '#3a5f9c'], [1081, 507.5, '#3a5f9c'], [1076.5, 971, '#3a5f9c'], [724, 859, '#3d7034'], [698.500, 975, '#7b4a42'], [982, 997, '#3d7034']];

function drawMap() {
  const sheets = Object.values(SHEETS);
  const layer = fn => sheets.map(s => `<g transform="translate(${s.at}) scale(.33333)">${fn(s)}</g>`).join('');
  const paths = (cls, list) => (list || []).map(d => `<path class="${cls}" d="${d}"/>`).join('');
  let out = layer(s => paths('wood', s.wood) + paths('clearing', s.clearing));
  out += `<g transform="translate(780 670) scale(.33333)"><path class="river" d="M1110 190L1050 140 960 95 870 75 800 90 720 120 650 165 590 230 560 280 545 340 500 395 440 460 380 520 300 590 200 650 100 690 0 720-80 770-190 860-140 990H-50V800L50 765 150 740 250 690 340 630 420 560 500 480 550 420 580 350 620 290 680 240 740 200 800 185 900 180 980 200 1040 240 1080 300 1110 360z"/></g>`;
  out += layer(s => paths('rail', s.rail) + paths('road', s.road));
  out += layer(s => (s.wide || []).map(d => `<path d="${d}" stroke="#020509" stroke-width="3"/>`).join(''));
  out += layer(s => paths('edge', s.high));
  out += layer(s => paths('core', s.high));
  out += layer(s => s.metro.map(m => `<path class="metro" stroke="${m[0]}" d="${m[1]}"/><path d="${m[1]}" stroke="#0d0b0c" stroke-width=".7"/>`).join(''));
  out += LABELS.map(([t, x, y]) => `<text x="${x}" y="${y}">${t}</text>`).join('');
  out += DISTRICTS.map(([t, x, y]) => `<rect x="${x - 20.5}" y="${y - 12}" width="41" height="15" fill="#05090f"/><text class="district" x="${x}" y="${y}">${t}</text>`).join('');
  out += TILTED.map(([t, x, y, a]) => `<text transform="translate(${x} ${y}) rotate(${a})">${t}</text>`).join('');
  [...'秋石高架路'].forEach((c, i) => { out += `<text x="${888 + i * 1.5}" y="${703 + i * 12.2}">${c}</text>`; });
  [...'4号线'].forEach((c, i) => { out += `<text x="909" y="${732 + i * 11.5}">${c}</text>`; });
  out += `<text class="city" x="911.5" y="809">杭州市</text>`;
  const fills = { g: ['#6ca04b', '#c3566a'], s: ['#6ca04b', '#ee8b52'], o: ['#e5765b', '#e5765b'], y: ['#c3b548', '#c3b548'] };
  out += SIGNS.map(([t, x, y, k]) => {
    const w = t.length * 7.6 + 2, h = k === 'o' ? 15 : 12;
    return `<rect x="${x - w / 2}" y="${y - h / 2}" width="${w}" height="${h}" rx="1" fill="${fills[k][0]}"/><rect x="${x - w / 2}" y="${y - h / 2}" width="${w}" height="3" rx="1" fill="${fills[k][1]}"/><text class="sign" x="${x}" y="${y + 5}">${t}</text>`;
  }).join('');
  out += PLACES.map(([x, y, c]) => `<circle cx="${x}" cy="${y}" r="6.5" fill="#f1f5f8"/><circle cx="${x}" cy="${y}" r="3.6" fill="none" stroke="${c}" stroke-width="1.3"/><rect x="${x - 1.5}" y="${y - 1}" width="3" height="5" fill="${c}"/>`).join('');
  out += '<g fill="#28d42e"><circle cx="823.300" cy="744.300" r="9"/><circle cx="746.500" cy="766.500" r="5.700"/><circle cx="823.300" cy="811" r="5.700"/></g>';
  document.getElementById('map').innerHTML = out;
}
drawMap();
```
